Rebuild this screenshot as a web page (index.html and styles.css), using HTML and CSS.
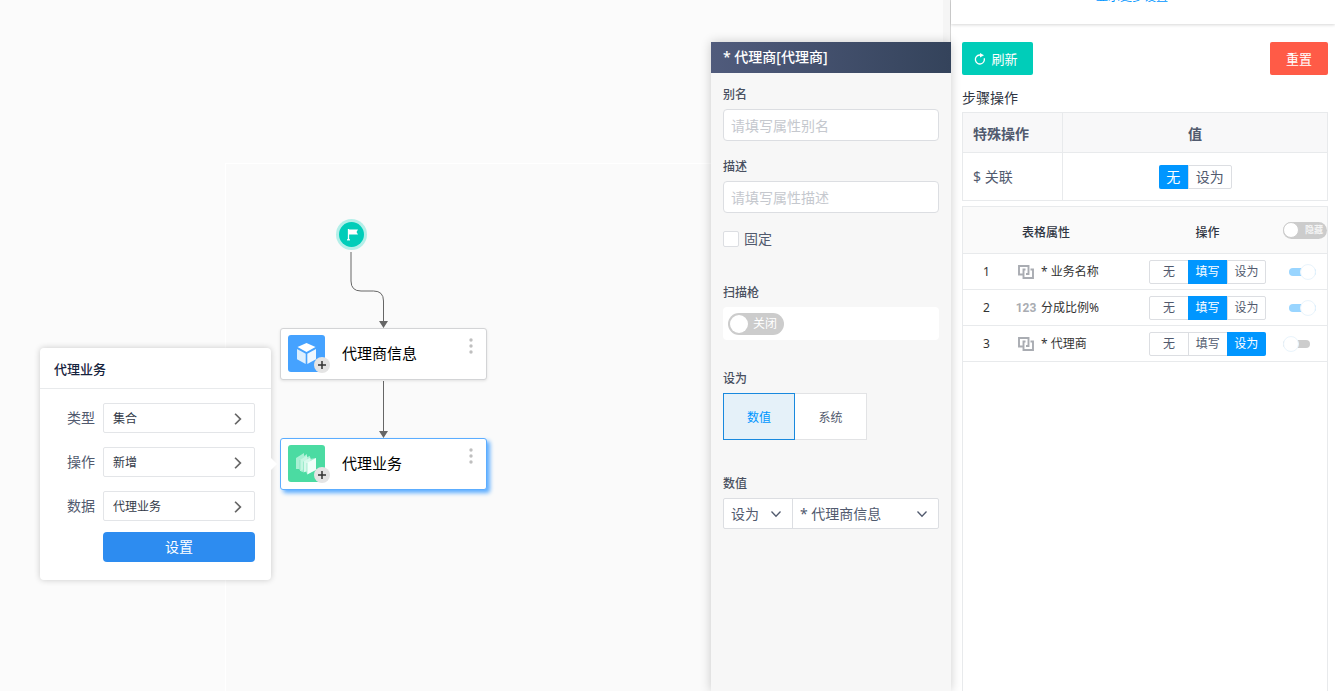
FILE: index.html
```html
<!DOCTYPE html>
<html lang="zh-CN">
<head>
<meta charset="utf-8">
<title>代理业务</title>
<link rel="stylesheet" href="styles.css">
</head>
<body>
<svg class="sprite" width="0" height="0" aria-hidden="true">
  <symbol id="i-right" viewBox="0 0 12 12"><path d="M3.500 1.500L8 6l-4.500 4.500" fill="none" stroke="currentColor" stroke-width="1.500"/></symbol>
  <symbol id="i-down" viewBox="0 0 12 12"><path d="M1.500 3.500L6 8.300l4.500-4.800" fill="none" stroke="currentColor" stroke-width="1.300"/></symbol>
  <symbol id="i-plus" viewBox="0 0 16 16"><circle cx="8" cy="8" r="8" fill="#e4e4e4"/><path d="M8 4v8M4 8h8" stroke="#333" stroke-width="1.500"/></symbol>
  <symbol id="i-dots" viewBox="0 0 4 16"><circle cx="2" cy="2" r="1.700"/><circle cx="2" cy="8" r="1.700"/><circle cx="2" cy="14" r="1.700"/></symbol>
  <symbol id="i-link" viewBox="0 0 16 14"><path d="M4.500 9.500H1V1h9.500v8H8M7.500 4.500H5.500V13H15V4.500h-2.500" fill="none" stroke="currentColor" stroke-width="1.900"/></symbol>
</svg>
<main class="canvas">
  <div class="sheet"></div>
  <div class="track"></div>
  <svg class="wires" width="500" height="500" aria-hidden="true">
    <g fill="none" stroke="#666" stroke-width="1">
      <path d="M351 252v29q0 10 10 10h12.500q10 0 10 10v22"/>
      <path d="M383.500 381v52"/>
    </g>
    <path d="M379 321h9l-4.500 7zM379 431h9l-4.500 7z" fill="#666"/>
  </svg>
  <div class="start">
    <svg viewBox="0 0 25 25" width="25" height="25" aria-hidden="true"><path d="M9.500 7v11" stroke="#fff" stroke-width="1.300"/><path d="M10 7.500h9l-1.500 2.500 1.500 2.500h-9z" fill="#fff"/><path d="M8 17.800h3" stroke="#fff" stroke-width="1.200"/></svg>
  </div>
  <section class="node node-info">
    <span class="node-icon blue">
      <svg viewBox="0 0 37 37" width="37" height="37" aria-hidden="true"><path d="M18.500 8l9 4-9 5-9-5z" fill="#fff"/><path d="M9 14l8.700 4.700V29L9 24.200z" fill="#dcefff"/><path d="M28 14l-8.700 4.700V29l8.700-4.800z" fill="#eef7ff"/></svg>
      <svg class="plus" width="16" height="16"><use href="#i-plus"/></svg>
    </span>
    <span class="node-name">代理商信息</span>
    <svg class="dots" width="4" height="16"><use href="#i-dots"/></svg>
  </section>
  <section class="node node-biz">
    <span class="node-icon green">
      <svg viewBox="0 0 37 37" width="37" height="37" aria-hidden="true"><path d="M8 13l8-5v3l3-2v3l3-1v3l6-1v11l-8 5-3-3-3 1-3-3-3 0z" fill="#a9f0d4"/><path d="M12 15l7-4.500v12l-7 3.500z" fill="#c5f6e2"/><path d="M15.500 16.500l7-4v12l-7 3z" fill="#d8f9ec"/><path d="M19 18l9-5v12l-9 4.500z" fill="#f0fff9"/><path d="M12 15v10M15.500 16.500v10.500M19 18v11" stroke="#7be3ba" stroke-width=".6"/></svg>
      <svg class="plus" width="16" height="16"><use href="#i-plus"/></svg>
    </span>
    <span class="node-name">代理业务</span>
    <svg class="dots" width="4" height="16"><use href="#i-dots"/></svg>
  </section>

  <section class="popover">
    <h2 class="popover-title">代理业务</h2>
    <div class="popover-body">
      <span class="pop-label" id="l-type">类型</span>
      <button class="pick" aria-labelledby="l-type">集合<svg width="14" height="14"><use href="#i-right"/></svg></button>
      <span class="pop-label" id="l-op">操作</span>
      <button class="pick" aria-labelledby="l-op">新增<svg width="14" height="14"><use href="#i-right"/></svg></button>
      <span class="pop-label" id="l-data">数据</span>
      <button class="pick" aria-labelledby="l-data">代理业务<svg width="14" height="14"><use href="#i-right"/></svg></button>
      <button class="primary">设置</button>
    </div>
  </section>

  <aside class="props">
    <h2 class="props-title">* 代理商[代理商]</h2>
    <div class="props-body">
      <label class="field-label" for="alias">别名</label>
      <input class="text" id="alias" type="text" placeholder="请填写属性别名">
      <label class="field-label spaced" for="desc">描述</label>
      <input class="text" id="desc" type="text" placeholder="请填写属性描述">
      <label class="check"><input type="checkbox">固定</label>
      <span class="field-label scan-label" id="l-scan">扫描枪</span>
      <div class="scan">
        <label class="switch-text"><input type="checkbox" aria-labelledby="l-scan"><span>关闭</span></label>
      </div>
      <span class="field-label set-label">设为</span>
      <div class="tabs">
        <button class="tab active">数值</button>
        <button class="tab">系统</button>
      </div>
      <label class="field-label value-label" for="value">数值</label>
      <div class="selects">
        <span class="select mode"><select aria-label="设为"><option>设为</option></select><svg width="12" height="12"><use href="#i-down"/></svg></span>
        <span class="select target"><select id="value"><option>* 代理商信息</option></select><svg width="12" height="12"><use href="#i-down"/></svg></span>
      </div>
    </div>
  </aside>
</main>

<aside class="side">
  <header class="side-head"><a class="more" href="#">显示更多设置</a></header>
  <div class="side-body">
    <div class="actions">
      <button class="btn refresh"><svg viewBox="0 0 12 12" width="12" height="12" aria-hidden="true"><path d="M7 2H5.500a4.500 4.500 0 1 0 4.700 3.200" fill="none" stroke="#fff" stroke-width="1.300"/><path d="M6 0l4 2.200L6 4.500z" fill="#fff"/></svg>刷新</button>
      <button class="btn reset">重置</button>
    </div>
    <h3 class="side-title">步骤操作</h3>
    <table class="special">
      <thead><tr><th>特殊操作</th><th>值</th></tr></thead>
      <tbody><tr><td>$ 关联</td><td><div class="group large"><button class="on">无</button><button>设为</button></div></td></tr></tbody>
    </table>
    <div class="attr-box">
      <table class="attrs">
        <thead><tr><th></th><th>表格属性</th><th>操作</th><th><label class="switch-head"><input type="checkbox"><span>隐藏</span></label></th></tr></thead>
        <tbody>
          <tr><td>1</td><td><span class="attr"><svg width="16" height="14"><use href="#i-link"/></svg>* 业务名称</span></td><td><div class="group"><button>无</button><button class="on">填写</button><button>设为</button></div></td><td><input class="mini" type="checkbox" aria-label="业务名称" checked></td></tr>
          <tr><td>2</td><td><span class="attr"><b class="num">123</b>分成比例%</span></td><td><div class="group"><button>无</button><button class="on">填写</button><button>设为</button></div></td><td><input class="mini" type="checkbox" aria-label="分成比例" checked></td></tr>
          <tr><td>3</td><td><span class="attr"><svg width="16" height="14"><use href="#i-link"/></svg>* 代理商</span></td><td><div class="group"><button>无</button><button>填写</button><button class="on">设为</button></div></td><td><input class="mini" type="checkbox" aria-label="代理商"></td></tr>
        </tbody>
      </table>
    </div>
  </div>
</aside>
</body>
</html>
```
FILE: styles.css
```css
* { box-sizing: border-box; }
body {
  margin: 0;
  display: flex;
  height: 100vh;
  overflow: hidden;
  font: 14px/20px "Noto Sans", "Noto Sans CJK SC", sans-serif;
  color: #515a6e;
  background: #fff;
}
button, input, select { font: inherit; color: inherit; margin: 0; }
button { padding: 0; border: 0; background: none; cursor: pointer; }
h2, h3 { margin: 0; font-size: 14px; }
svg { flex: none; }
.sprite { position: absolute; }

/* Flow canvas */
.canvas { position: relative; z-index: 1; flex: 1; min-width: 0; background: #fbfbfb; }
.sheet { position: absolute; left: 225px; top: 163px; right: 0; bottom: 0; background: #fafafa; border: solid #fff; border-width: 1px 0 0 1px; }
.track { position: absolute; top: 0; right: 0; bottom: 0; width: 7px; background: #f5f5f5; }
.wires { position: absolute; left: 0; top: 0; }
.start {
  position: absolute; left: 339px; top: 222px; width: 25px; height: 25px;
  border-radius: 50%; background: #00cdb9; box-shadow: 0 0 0 3px #b4efe9;
}
.start svg { display: block; }
.node {
  position: absolute; left: 280px; width: 207px; height: 52px; padding: 6px 13px 8px 7px;
  display: flex; align-items: center;
  border: 1px solid #d3d4d6; border-radius: 3px; background: #fff;
  box-shadow: 0 1px 3px rgba(0, 0, 0, .1);
  font-size: 15px; color: #000;
}
.node-info { top: 328px; }
.node-biz { top: 438px; border-color: #5cadff; box-shadow: 3px 3px 4px #5cadff; }
.node-icon { position: relative; width: 37px; height: 37px; border-radius: 3px; }
.node-icon svg { display: block; }
.blue { background: #45a2ff; }
.green { background: #4bdba2; }
.node-icon .plus { position: absolute; right: -5px; bottom: -1px; }
.node-name { flex: 1; padding-left: 17px; }
.dots { align-self: flex-start; margin-top: 3px; fill: #bfbfbf; }

/* Node popover */
.popover {
  position: absolute; left: 40px; top: 348px; width: 231px;
  border-radius: 4px; background: #fff; box-shadow: 0 0 6px rgba(0, 0, 0, .2);
}
.popover::after {
  content: ""; position: absolute; left: 100%; top: 110px;
  border: 6px solid transparent; border-right-width: 0; border-left-color: #fff;
}
.popover-title { padding: 11px 14px 9px; border-bottom: 1px solid #e8eaec; font-size: 13px; color: #17233d; font-weight: 500; }
.popover-body {
  display: grid; grid-template-columns: auto 152px; justify-content: end; align-items: center;
  gap: 14px 8px; padding: 14px 16px 18px;
}
.pop-label { font-size: 14px; }
.pick {
  display: flex; justify-content: space-between; align-items: center; height: 30px; padding: 1px 9px 0;
  border: 1px solid #e3e5e8; border-radius: 2px; background: #fff; font-size: 12px; color: #333a48;
}
.pick svg { color: #666; }
.primary { grid-column: 2; height: 30px; margin-top: -3px; border-radius: 4px; background: #2d8cf0; color: #fff; }

/* Property panel */
.props {
  position: absolute; right: -1px; top: 42px; bottom: 0; width: 240px;
  background: #f7f7f7; box-shadow: 0 0 10px rgba(0, 0, 0, .2);
}
.props-title { height: 31px; padding: 5px 12px; background: linear-gradient(90deg, #505b7c, #34435b); color: #fff; font-weight: 500; }
.props-body { display: flex; flex-direction: column; padding: 13px 12px; }
.field-label { font-size: 12px; font-weight: 500; line-height: 18px; margin-bottom: 5px; color: #495060; }
.spaced { margin-top: 17px; }
.text { width: 100%; height: 32px; padding: 0 7px; border: 1px solid #dcdee2; border-radius: 4px; background: #fff; outline: 0; }
.text::placeholder { color: #c5c8ce; }
.check { display: flex; align-items: center; gap: 5px; margin-top: 16px; }
.check input { appearance: none; width: 16px; height: 16px; border: 1px solid #dcdee2; border-radius: 2px; background: #fff; }
.scan-label { margin-top: 35px; }
.scan { padding: 6px 5px; height: 33px; border-radius: 4px; background: #fff; }
.switch-text { display: flex; align-items: center; gap: 5px; width: 56px; height: 22px; padding: 2px; border-radius: 11px; background: #ccc; color: #fff; font-size: 12px; }
.switch-text input { appearance: none; width: 18px; height: 18px; border-radius: 50%; background: #fff; }
.set-label { margin-top: 30px; }
.tabs { display: flex; }
.tab { width: 72px; height: 47px; padding-top: 2px; border: 1px solid #e2e3e5; border-left: 0; background: #fff; font-size: 12px; }
.tab.active { border: 1px solid #1989de; background: #e5f1f9; color: #0096ff; }
.value-label { margin-top: 35px; }
.selects { display: flex; height: 31px; border: 1px solid #dcdee2; border-radius: 2px; background: #fff; }
.select { display: flex; align-items: center; padding-right: 10px; }
.select select { appearance: none; flex: 1; min-width: 0; height: 100%; padding: 0 0 0 7px; border: 0; background: none; outline: 0; }
.mode { width: 69px; border-right: 1px solid #dcdee2; }
.target { flex: 1; }

/* Step sidebar */
.side { display: flex; flex-direction: column; width: 385px; border-left: 1px solid #d5d5d5; background: #fff; }
.side-head { height: 24px; padding-right: 22px; box-shadow: 0 1px 3px rgba(0, 0, 0, .16); text-align: center; }
.more { display: block; margin-top: -12px; font-size: 12px; line-height: 18px; color: #0096ff; text-decoration: none; }
.side-body { flex: 1; display: flex; flex-direction: column; padding: 18px 7px 0 11px; }
.actions { display: flex; justify-content: space-between; }
.btn { display: flex; align-items: center; justify-content: center; gap: 5px; height: 33px; border-radius: 2px; color: #fff; font-size: 13px; }
.refresh { width: 71px; padding-right: 3px; background: #00cdb9; }
.reset { width: 58px; background: #ff5b47; }
.side-title { margin: 13px 0 4px; font-weight: 400; color: #2f3542; }
table { width: 100%; table-layout: fixed; border-collapse: collapse; }
th { font-weight: 500; }
td, th { padding: 0; }
.special { border: 1px solid #dcdee2; }
.special th, .special td { height: 40px; border: 1px solid #e8eaec; }
.special td { height: 48px; }
.special th { padding-top: 2px; background: #f8f8f9; font-weight: 700; }
.special th:first-child, .special td:first-child { width: 100px; padding-left: 10px; text-align: left; }
.group { display: flex; width: 117px; height: 24px; margin: 0 auto; border: 1px solid #dcdee2; border-radius: 2px; background: #fff; font-size: 12px; }
.group button { flex: 1 0 auto; min-width: 38px; border-left: 1px solid #dcdee2; }
.group button:first-child { border-left: 0; }
.group .on { margin: -1px 0; padding: 0 1px; border: 0; background: #0096ff; color: #fff; }
.group.large { width: 73px; font-size: 14px; }
.group.large button { min-width: 29px; }
.group .on:first-child { margin-left: -1px; border-radius: 2px 0 0 2px; }
.group .on:last-child { margin-right: -1px; border-radius: 0 2px 2px 0; }
.attr-box { flex: 1; margin-top: 5px; border: 1px solid #e8eaec; border-bottom: 0; }
.attrs { font-size: 12px; text-align: center; color: #333; }
.attrs tr { border-bottom: 1px solid #e8eaec; }
.attrs th { height: 46px; padding-top: 6px; background: #fafafa; color: #2f3542; }
.attrs td { height: 36px; padding-top: 2px; color: #333; }
.attrs .group { color: #515a6e; }
.attrs th:nth-child(1) { width: 47px; }
.attrs th:nth-child(2) { padding-left: 12px; text-align: left; }
.attrs th:nth-child(3) { width: 137px; }
.attrs th:nth-child(4) { width: 51px; padding-top: 1px; }
.attrs td:nth-child(2) { padding-left: 8px; }
.attrs td:nth-child(4) { text-align: left; }
.attr { display: flex; align-items: center; gap: 7px; }
.attr svg { color: #a9acb2; }
.num { width: 16px; display: flex; justify-content: center; font: 700 12px/18px Roboto, sans-serif; color: #a9acb2; }
.switch-head { display: flex; align-items: center; justify-content: space-between; width: 44px; height: 17px; margin: 0 0 0 auto; padding-right: 4px; border-radius: 9px; background: #ccc; color: #f4f4f4; font-size: 9px; font-weight: 700; }
.switch-head input { appearance: none; width: 16px; height: 16px; border: 1px solid #ccc; border-radius: 50%; background: #fff; }
.mini { appearance: none; display: flex; align-items: center; width: 27px; height: 8px; margin-left: 7px; border-radius: 4px; background: #ccc; }
.mini::before { content: ""; width: 14px; height: 14px; border: 1px solid #e9f4fc; border-radius: 50%; background: #fff; }
.mini:checked { margin-left: 13px; background: #99d5ff; justify-content: flex-end; }
```
